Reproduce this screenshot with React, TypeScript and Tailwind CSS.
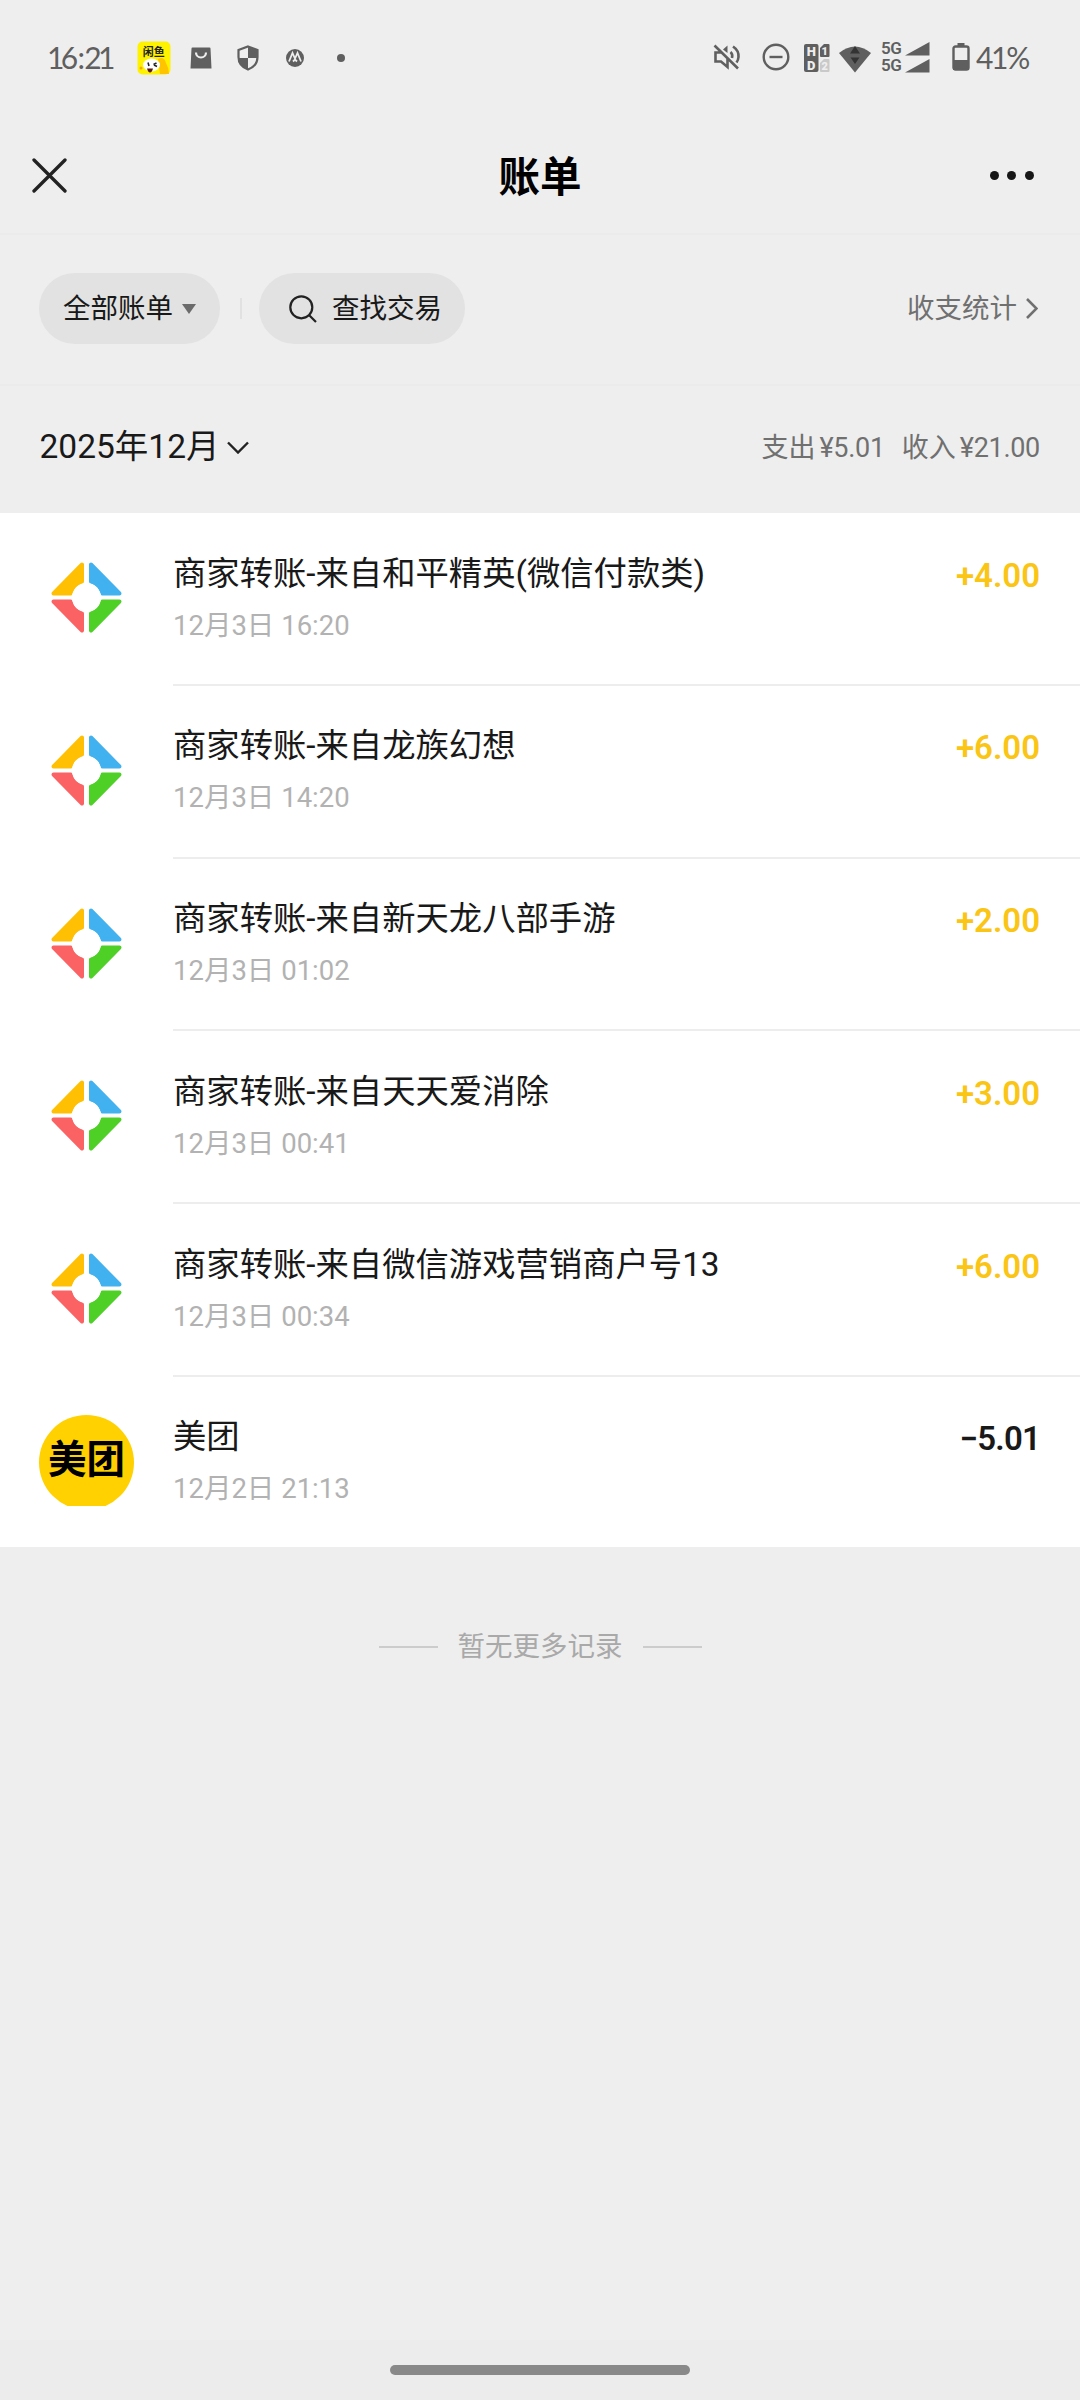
import type { ReactNode } from 'react'

type Bill = { title: string; time: string; amount: string; income: boolean; logo: 'game' | 'meituan' }

const bills: Bill[] = [
  { title: '商家转账-来自和平精英(微信付款类)', time: '12月3日 16:20', amount: '+4.00', income: true, logo: 'game' },
  { title: '商家转账-来自龙族幻想', time: '12月3日 14:20', amount: '+6.00', income: true, logo: 'game' },
  { title: '商家转账-来自新天龙八部手游', time: '12月3日 01:02', amount: '+2.00', income: true, logo: 'game' },
  { title: '商家转账-来自天天爱消除', time: '12月3日 00:41', amount: '+3.00', income: true, logo: 'game' },
  { title: '商家转账-来自微信游戏营销商户号13', time: '12月3日 00:34', amount: '+6.00', income: true, logo: 'game' },
  { title: '美团', time: '12月2日 21:13', amount: '−5.01', income: false, logo: 'meituan' },
]

function GameLogo() {
  return (
    <svg className="mt-[12px] mr-px" width="71" height="71" viewBox="0 0 71 71" strokeWidth="4" strokeLinejoin="round">
      <path d="M31 2.500V19.500A17 17 0 0 0 19.500 31.500H2.500Z" fill="#ffc004" stroke="#ffc004" />
      <path d="M40 2.500V19.500A17 17 0 0 1 51.500 31.500H68.500Z" fill="#41b1ef" stroke="#41b1ef" />
      <path d="M31 68.500V51.500A17 17 0 0 1 19.500 39.500H2.500Z" fill="#fb6264" stroke="#fb6264" />
      <path d="M40 68.500V51.500A17 17 0 0 0 51.500 39.500H68.500Z" fill="#4ed027" stroke="#4ed027" />
      <circle cx="35.500" cy="35.500" r="14.500" fill="#fff" />
    </svg>
  )
}

function MeituanLogo() {
  return (
    <div className="mt-px w-[95px] h-[91px] overflow-hidden">
      <div className="w-[95px] h-[95px] pb-[4px] rounded-full bg-[#ffd100] flex items-center justify-center">
        <span className="text-[38.5px] leading-none font-bold text-black">美团</span>
      </div>
    </div>
  )
}

function StatusBar() {
  return (
    <div className="h-[116px] flex items-center justify-between pl-[49px] pr-[50px] pb-[2px] text-[#5f5f5f]">
      <div className="flex items-center">
        <span className="w-[88px] whitespace-nowrap text-[30px] leading-none tracking-[-0.7px] font-[Lato]">
          <span className="-ml-[2px] -mr-[3px]">1</span>6:2<span className="-mx-[3px]">1</span>
        </span>
        <svg className="mt-[2px]" width="34" height="34" viewBox="0 0 34 34">
          <rect x=".5" y=".5" width="33" height="33" rx="5" fill="#fff200" />
          <text x="16.8" y="14.5" fontSize="11" fontWeight="700" textAnchor="middle" fill="#222">闲鱼</text>
          <path d="M21 18q6-3 8 4 3 5 3 11h-9z" fill="#ffc400" />
          <ellipse cx="14.500" cy="24" rx="8.500" ry="6.500" fill="#fff" />
          <path d="M11 21.500l1 3.500M16.500 23.500l3-1.500M17 24l3 1.500" fill="none" stroke="#222" strokeWidth="1.600" />
          <path d="M10 27.500h6q-1 4-3 4t-3-4z" fill="#5b1b12" />
          <circle cx="4" cy="27" r="1.500" fill="#ffa800" />
        </svg>
        <svg className="ml-[19px] mt-[2px]" width="22" height="22" viewBox="0 0 22 22">
          <path d="M2.500.5h17a1 1 0 0 1 1 1L21.500 21.500H.5L1.500 1.500a1 1 0 0 1 1-1Z" fill="currentColor" />
          <path d="M6 5.500a5 5 0 0 0 10 0" fill="none" stroke="#eee" strokeWidth="2.200" />
        </svg>
        <svg className="ml-[25px] mt-[2px]" width="22" height="26" viewBox="0 0 22 26">
          <path d="M11 1.500 20.500 5v7c0 6-4 10.500-9.500 12.500C5.500 22.500 1.500 18 1.500 12V5Z" fill="none" stroke="currentColor" strokeWidth="2.200" />
          <path d="M11 2v11H2V5ZM11 13h9c-.5 5-3.500 9-9 11Z" fill="currentColor" transform="matrix(-1 0 0 1 22 0)" />
        </svg>
        <svg className="ml-[27px] mt-[2px]" width="18" height="18" viewBox="0 0 18 18">
          <circle cx="9" cy="9" r="9" fill="currentColor" />
          <path d="M3 12.500 6.500 4 9 9.500 11.500 4 15 12.500M7 12.500l2-2 2 2" fill="none" stroke="#eee" strokeWidth="1.800" />
        </svg>
        <span className="ml-[33px] mt-[2px] w-2 h-2 rounded-full bg-[#5f5f5f]" />
      </div>
      <div className="flex items-center">
        <svg width="28" height="26" viewBox="0 0 28 26" fill="none" stroke="currentColor" strokeWidth="2.600">
          <path d="M1.500 1.500l23.500 23M8 8.500H2.500v9H8l6.500 5.500V15" />
          <path d="M10 5.500 14.500 1.500v7.500Z" fill="currentColor" stroke="none" />
          <path d="M17.500 8q2.500 2 1.500 6M20 2.500q6 4 5.500 10.500-.2 3-2 5.500" />
        </svg>
        <svg className="ml-[21px]" width="28" height="28" viewBox="0 0 28 28" fill="none" stroke="currentColor" strokeWidth="2.400">
          <circle cx="14" cy="14" r="12.300" />
          <path d="M7.500 14h13" />
        </svg>
        <svg className="ml-[13px] mt-[2px]" width="28" height="30" viewBox="0 0 28 30" fontFamily="Roboto" fontSize="13" fontWeight="900" textAnchor="middle">
          <rect x="1" y="1" width="14.500" height="28" rx="2" fill="currentColor" />
          <path d="M17 5l4-4h4.500a1 1 0 0 1 1 1v11a1 1 0 0 1-1 1H18a1 1 0 0 1-1-1Z" fill="currentColor" />
          <path d="M17 20l4-4h4.500a1 1 0 0 1 1 1v11a1 1 0 0 1-1 1H18a1 1 0 0 1-1-1Z" fill="#c9c9c9" />
          <text x="8.200" y="12.500" fill="#eee">H</text>
          <text x="8.200" y="26.500" fill="#eee">D</text>
          <text x="21.800" y="12" fontSize="11" fill="#eee">1</text>
          <text x="21.800" y="27" fontSize="11" fill="#eee">2</text>
        </svg>
        <svg className="ml-[7px] mt-[4px]" width="34" height="28" viewBox="0 0 34 28">
          <path d="M1 8Q17-5 33 8L17 27.500Z" fill="currentColor" />
          <path d="M17 1l5 7.500H12ZM17 19l-4.500-6.500h9Z" fill="#333" />
        </svg>
        <div className="ml-[9px] w-[22px] flex flex-col text-[17px] leading-[17px] tracking-[-0.5px] font-semibold font-[Roboto]">
          <span>5G</span>
          <span>5G</span>
        </div>
        <svg className="ml-px" width="26" height="32" viewBox="0 0 26 32" fill="currentColor">
          <path d="M1 14.500 25.500 1v13.500ZM1 31.500 25.500 18v13.500Z" />
        </svg>
        <svg className="ml-[22px]" width="18" height="28" viewBox="0 0 18 28" fill="none">
          <path d="M5.500 0h7v3h-7ZM1 17h16v10H1Z" fill="currentColor" />
          <rect x="1.500" y="3.500" width="15" height="23" rx="2" stroke="currentColor" strokeWidth="2.400" />
        </svg>
        <span className="ml-[6px] w-[54px] whitespace-nowrap text-[30px] leading-none tracking-[-0.8px] font-[Lato]">
          4<span className="-mx-[1.500px]">1</span>%
        </span>
      </div>
    </div>
  )
}

function NavBar() {
  return (
    <div className="h-[119px] border-b-2 border-[#ebebeb] grid grid-cols-3 items-center px-[32px] pt-[2px]">
      <svg width="35" height="35" viewBox="0 0 35 35" stroke="#222" strokeWidth="3.300" strokeLinecap="round">
        <path d="M2 2l31 31M33 2 2 33" />
      </svg>
      <h1 className="pt-[4px] text-center text-[41.5px] leading-none font-bold text-black">账单</h1>
      <div className="flex justify-end gap-[8.500px] pr-[14px]">
        <span className="w-[9px] h-[9px] rounded-full bg-[#161616]" />
        <span className="w-[9px] h-[9px] rounded-full bg-[#161616]" />
        <span className="w-[9px] h-[9px] rounded-full bg-[#161616]" />
      </div>
    </div>
  )
}

function Pill({ children, className }: { children: ReactNode; className: string }) {
  return <button className={`h-[71px] rounded-full bg-[#e2e2e2] flex items-center text-[27.5px] leading-none text-[#191919] ${className}`}>{children}</button>
}

function FilterBar() {
  return (
    <div className="h-[151px] border-b-2 border-[#ebebeb] flex items-center pl-[39px] pr-[42px] pb-[2px]">
      <Pill className="w-[181px] pl-[24px] gap-[9px]">
        全部账单
        <svg className="mt-px" width="14" height="10" viewBox="0 0 14 10" fill="#6b6b6b">
          <path d="M0 0h14L7 10Z" />
        </svg>
      </Pill>
      <span className="w-[2px] h-[21px] ml-[19.500px] mr-[17.500px] bg-[#e1e1e1]" />
      <Pill className="w-[206px] pl-[30px] gap-[15px]">
        <svg width="28" height="28" viewBox="0 0 28 28" fill="none" stroke="#222" strokeWidth="2.200">
          <circle cx="12.300" cy="12.300" r="11" />
          <path d="M20 20l7 7" />
        </svg>
        查找交易
      </Pill>
      <div className="ml-auto flex items-center gap-[8px] text-[27.5px] leading-none text-[#707070]">
        收支统计
        <svg width="13" height="21" viewBox="0 0 13 21" fill="none" stroke="#707070" strokeWidth="2.600">
          <path d="M2 1l9.500 9.500L2 20" />
        </svg>
      </div>
    </div>
  )
}

function MonthBar() {
  return (
    <div className="h-[127px] flex items-center justify-between pl-[39.500px] pr-[40px] pb-[6px]">
      <div className="flex items-center gap-[7.500px] text-[33.5px] leading-none text-[#191919]">
        2025年12月
        <svg className="mt-[2px]" width="22" height="13" viewBox="0 0 22 13" fill="none" stroke="#222" strokeWidth="2.400">
          <path d="M1 1.500l10 10 10-10" />
        </svg>
      </div>
      <div className="flex gap-[17px] pt-[4px] text-[27px] leading-none text-[#707070]">
        <span>支出<span className="ml-[4px] tracking-[-0.3px]">¥5.01</span></span>
        <span>收入<span className="ml-[4px] tracking-[-0.3px]">¥21.00</span></span>
      </div>
    </div>
  )
}

function BillRow({ bill }: { bill: Bill }) {
  return (
    <div className="group h-[172.8px] last:h-[170px] flex">
      <div className="w-[173px] pl-[39px] pt-[37px]">
        <div className="w-[95px] h-[95px] flex justify-center items-start">
          {bill.logo === 'game' ? <GameLogo /> : <MeituanLogo />}
        </div>
      </div>
      <div className="flex-1 flex justify-between border-b-2 border-[#ededed] group-last:border-0 pt-[42.5px] pr-[40px]">
        <div>
          <p className="text-[33.35px] leading-[36px] text-[#191919]">{bill.title}</p>
          <p className="mt-[19px] text-[27.5px] leading-[30px] text-[#b2b2b2]">{bill.time}</p>
        </div>
        <p className={bill.income
          ? 'pt-[2px] text-[33px] leading-[36px] font-semibold text-[#fac515]'
          : 'pt-[2px] text-[33px] leading-[36px] tracking-[-0.8px] font-semibold text-[#191919]'}>{bill.amount}</p>
      </div>
    </div>
  )
}

export default function App() {
  return (
    <div className="w-[1080px] h-[2400px] flex flex-col bg-[#eeeeee] font-[Roboto,'Noto_Sans_CJK_SC',sans-serif]">
      <StatusBar />
      <NavBar />
      <FilterBar />
      <MonthBar />
      <div className="h-[1034px] bg-white">
        {bills.map(b => <BillRow key={b.time} bill={b} />)}
      </div>
      <div className="mt-[85px] flex items-center justify-center gap-[20px] text-[27.5px] leading-[30px] text-[#a9a9a9]">
        <span className="w-[59px] h-[2px] bg-[#cccccc]" />
        暂无更多记录
        <span className="w-[59px] h-[2px] bg-[#cccccc]" />
      </div>
      <div className="mt-auto h-[60px] bg-[#ececec] flex justify-center pt-[25px]">
        <span className="w-[300px] h-[10px] rounded-full bg-[#898989]" />
      </div>
    </div>
  )
}
